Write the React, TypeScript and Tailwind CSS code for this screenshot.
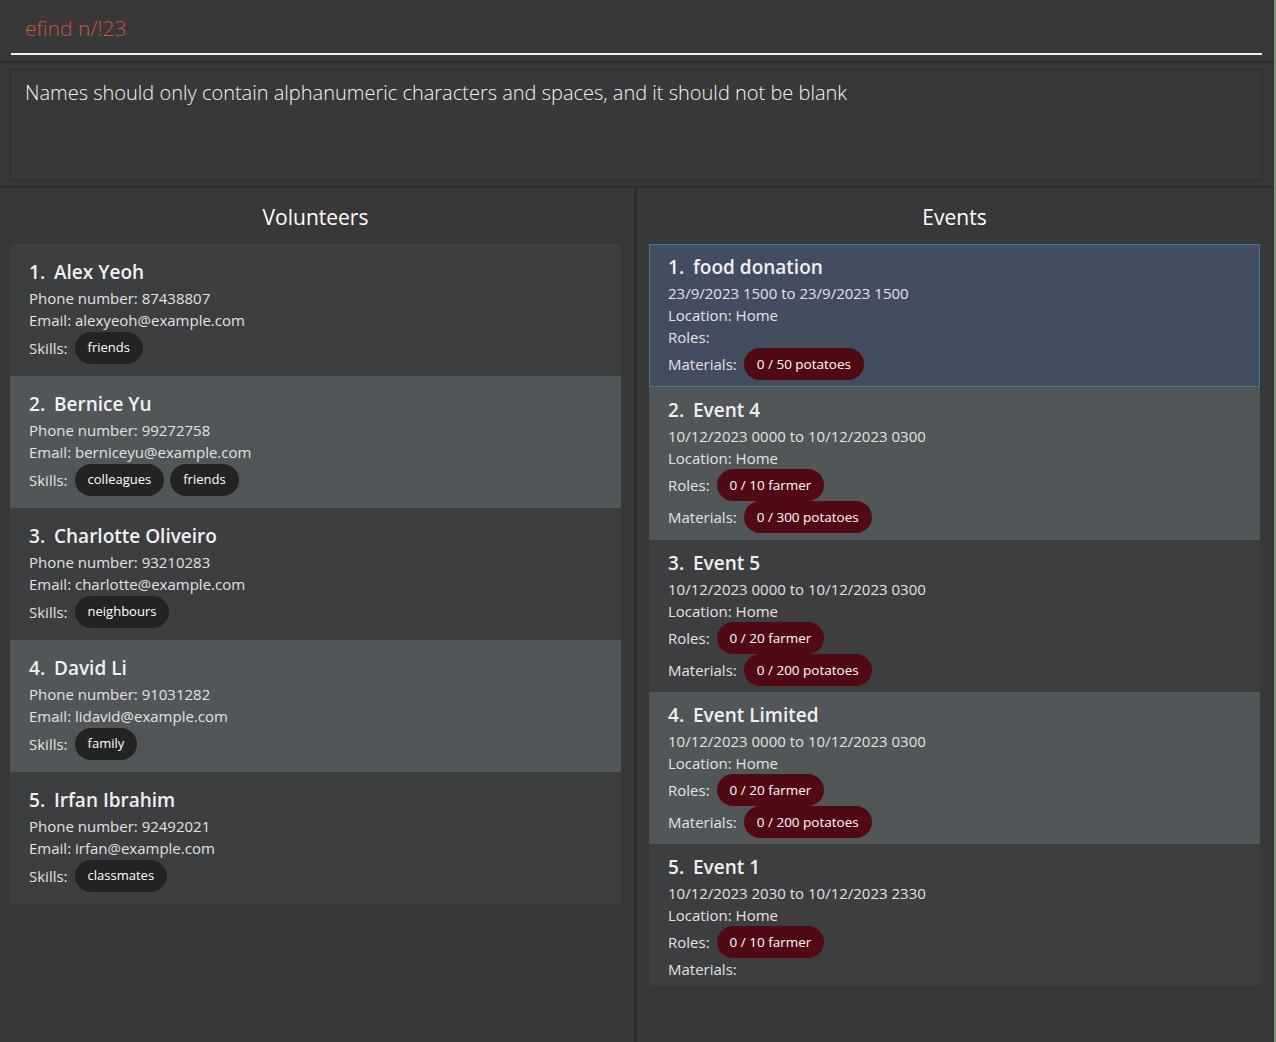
const VOLUNTEERS = [
  { name: "Alex Yeoh", phone: "87438807", email: "alexyeoh@example.com", skills: ["friends"] },
  { name: "Bernice Yu", phone: "99272758", email: "berniceyu@example.com", skills: ["colleagues", "friends"] },
  { name: "Charlotte Oliveiro", phone: "93210283", email: "charlotte@example.com", skills: ["neighbours"] },
  { name: "David Li", phone: "91031282", email: "lidavid@example.com", skills: ["family"] },
  { name: "Irfan Ibrahim", phone: "92492021", email: "irfan@example.com", skills: ["classmates"] },
];

const EVENTS = [
  { name: "food donation", time: "23/9/2023 1500 to 23/9/2023 1500", roles: [] as string[], materials: ["0 / 50 potatoes"] },
  { name: "Event 4", time: "10/12/2023 0000 to 10/12/2023 0300", roles: ["0 / 10 farmer"], materials: ["0 / 300 potatoes"] },
  { name: "Event 5", time: "10/12/2023 0000 to 10/12/2023 0300", roles: ["0 / 20 farmer"], materials: ["0 / 200 potatoes"] },
  { name: "Event Limited", time: "10/12/2023 0000 to 10/12/2023 0300", roles: ["0 / 20 farmer"], materials: ["0 / 200 potatoes"] },
  { name: "Event 1", time: "10/12/2023 2030 to 10/12/2023 2330", roles: ["0 / 10 farmer"], materials: [] as string[] },
];

const FONT = "font-['Segoe_UI','Open_Sans','Noto_Sans',sans-serif]";

function Chip({ label, tone }: { label: string; tone: "dark" | "red" }) {
  return (
    <span
      className={
        tone === "dark"
          ? "inline-flex h-[32px] items-center rounded-full bg-[#232323] px-[13px] text-[13px] text-white"
          : "inline-flex h-[32px] items-center rounded-full bg-[#510a12] px-[13px] text-[13.5px] font-medium text-white"
      }
    >
      {label}
    </span>
  );
}

function ChipRow({ label, items, tone }: { label: string; items: string[]; tone: "dark" | "red" }) {
  if (items.length === 0) {
    return <div className="h-[22px] leading-[22px] text-[15px] text-[#e2e2e2]">{label}</div>;
  }
  return (
    <div className="flex h-[32px] items-center gap-[6px] text-[15px] text-[#e2e2e2]">
      <span className="mr-[1px]">{label}</span>
      {items.map((item) => (
        <Chip key={item} label={item} tone={tone} />
      ))}
    </div>
  );
}

function Title({ index, name }: { index: number; name: string }) {
  return (
    <div className="flex h-[24px] items-center text-[19px] font-semibold text-[#f0f0f0]">
      <span className="w-[25px]">{index}.</span>
      <span>{name}</span>
    </div>
  );
}

function VolunteerCard({ v, index }: { v: (typeof VOLUNTEERS)[number]; index: number }) {
  const even = index % 2 === 0;
  return (
    <div className={`flex h-[132px] flex-col px-[19px] pt-[16px] ${even ? "bg-[#515658]" : "bg-[#3c3e40]"}`}>
      <Title index={index} name={v.name} />
      <div className="mt-[3px] h-[22px] leading-[22px] text-[15px] text-[#e2e2e2]">Phone number: {v.phone}</div>
      <div className="h-[22px] leading-[22px] text-[15px] text-[#e2e2e2]">Email: {v.email}</div>
      <div className="mt-px">
        <ChipRow label="Skills:" items={v.skills} tone="dark" />
      </div>
    </div>
  );
}

function EventCard({ e, index }: { e: (typeof EVENTS)[number]; index: number }) {
  const selected = index === 1;
  const even = index % 2 === 0;
  const bg = selected
    ? "border border-[#3d7d93] bg-[#424d5f] pt-[10px] pb-[6px] px-[18px]"
    : even
      ? "bg-[#515658] pt-[11px] px-[19px]"
      : "bg-[#3c3e40] pt-[11px] px-[19px]";
  const pad = selected ? "" : index === 2 ? "pb-[7px]" : "pb-[6px]";
  return (
    <div className={`flex flex-col ${bg} ${pad}`}>
      <Title index={index} name={e.name} />
      <div className="mt-[3px] h-[22px] leading-[22px] text-[15px] text-[#e2e2e2]">{e.time}</div>
      <div className="h-[22px] leading-[22px] text-[15px] text-[#e2e2e2]">Location: Home</div>
      <ChipRow label="Roles:" items={e.roles} tone="red" />
      <ChipRow label="Materials:" items={e.materials} tone="red" />
    </div>
  );
}

export default function App() {
  return (
    <div className={`flex h-[1042px] w-[1276px] overflow-hidden bg-[#383838] ${FONT}`}>
      <div className="flex min-w-0 flex-1 flex-col">
        {/* command box */}
        <div className="h-[61px] pl-[11px] pr-[11px]">
          <div className="flex h-[55px] items-center border-b-2 border-[#f2f2f2] pl-[14px] pt-[4px] text-[21px] font-light text-[#c9553f]">
            efind n/!23
          </div>
        </div>
        <div className="h-[2px] bg-[#2c2c2c]" />

        {/* result display */}
        <div className="h-[123px] px-[10px] pt-[6px]">
          <div className="h-[112px] border border-[#2c2c2c] px-[14px] pt-[8px] text-[20px] font-light text-[#f4f4f4]">
            Names should only contain alphanumeric characters and spaces, and it should not be blank
          </div>
        </div>
        <div className="h-[2px] bg-[#2c2c2c]" />

        {/* lists */}
        <div className="flex flex-1">
          <div className="flex w-[634px] flex-col pl-[10px] pr-[13px]">
            <div className="flex h-[56px] items-center justify-center pt-[4px] text-[21px] text-white">Volunteers</div>
            {VOLUNTEERS.map((v, i) => (
              <VolunteerCard key={v.name} v={v} index={i + 1} />
            ))}
          </div>
          <div className="w-[3px] bg-[#2c2c2c]" />
          <div className="flex flex-1 flex-col pl-[12px] pr-[13px]">
            <div className="flex h-[56px] items-center justify-center pt-[4px] text-[21px] text-white">Events</div>
            {EVENTS.map((e, i) => (
              <EventCard key={e.name} e={e} index={i + 1} />
            ))}
          </div>
        </div>
      </div>
      <div className="w-px bg-[#2c2c2c]" />
      <div className="w-[2px] bg-[#7e9a7a]" />
    </div>
  );
}
